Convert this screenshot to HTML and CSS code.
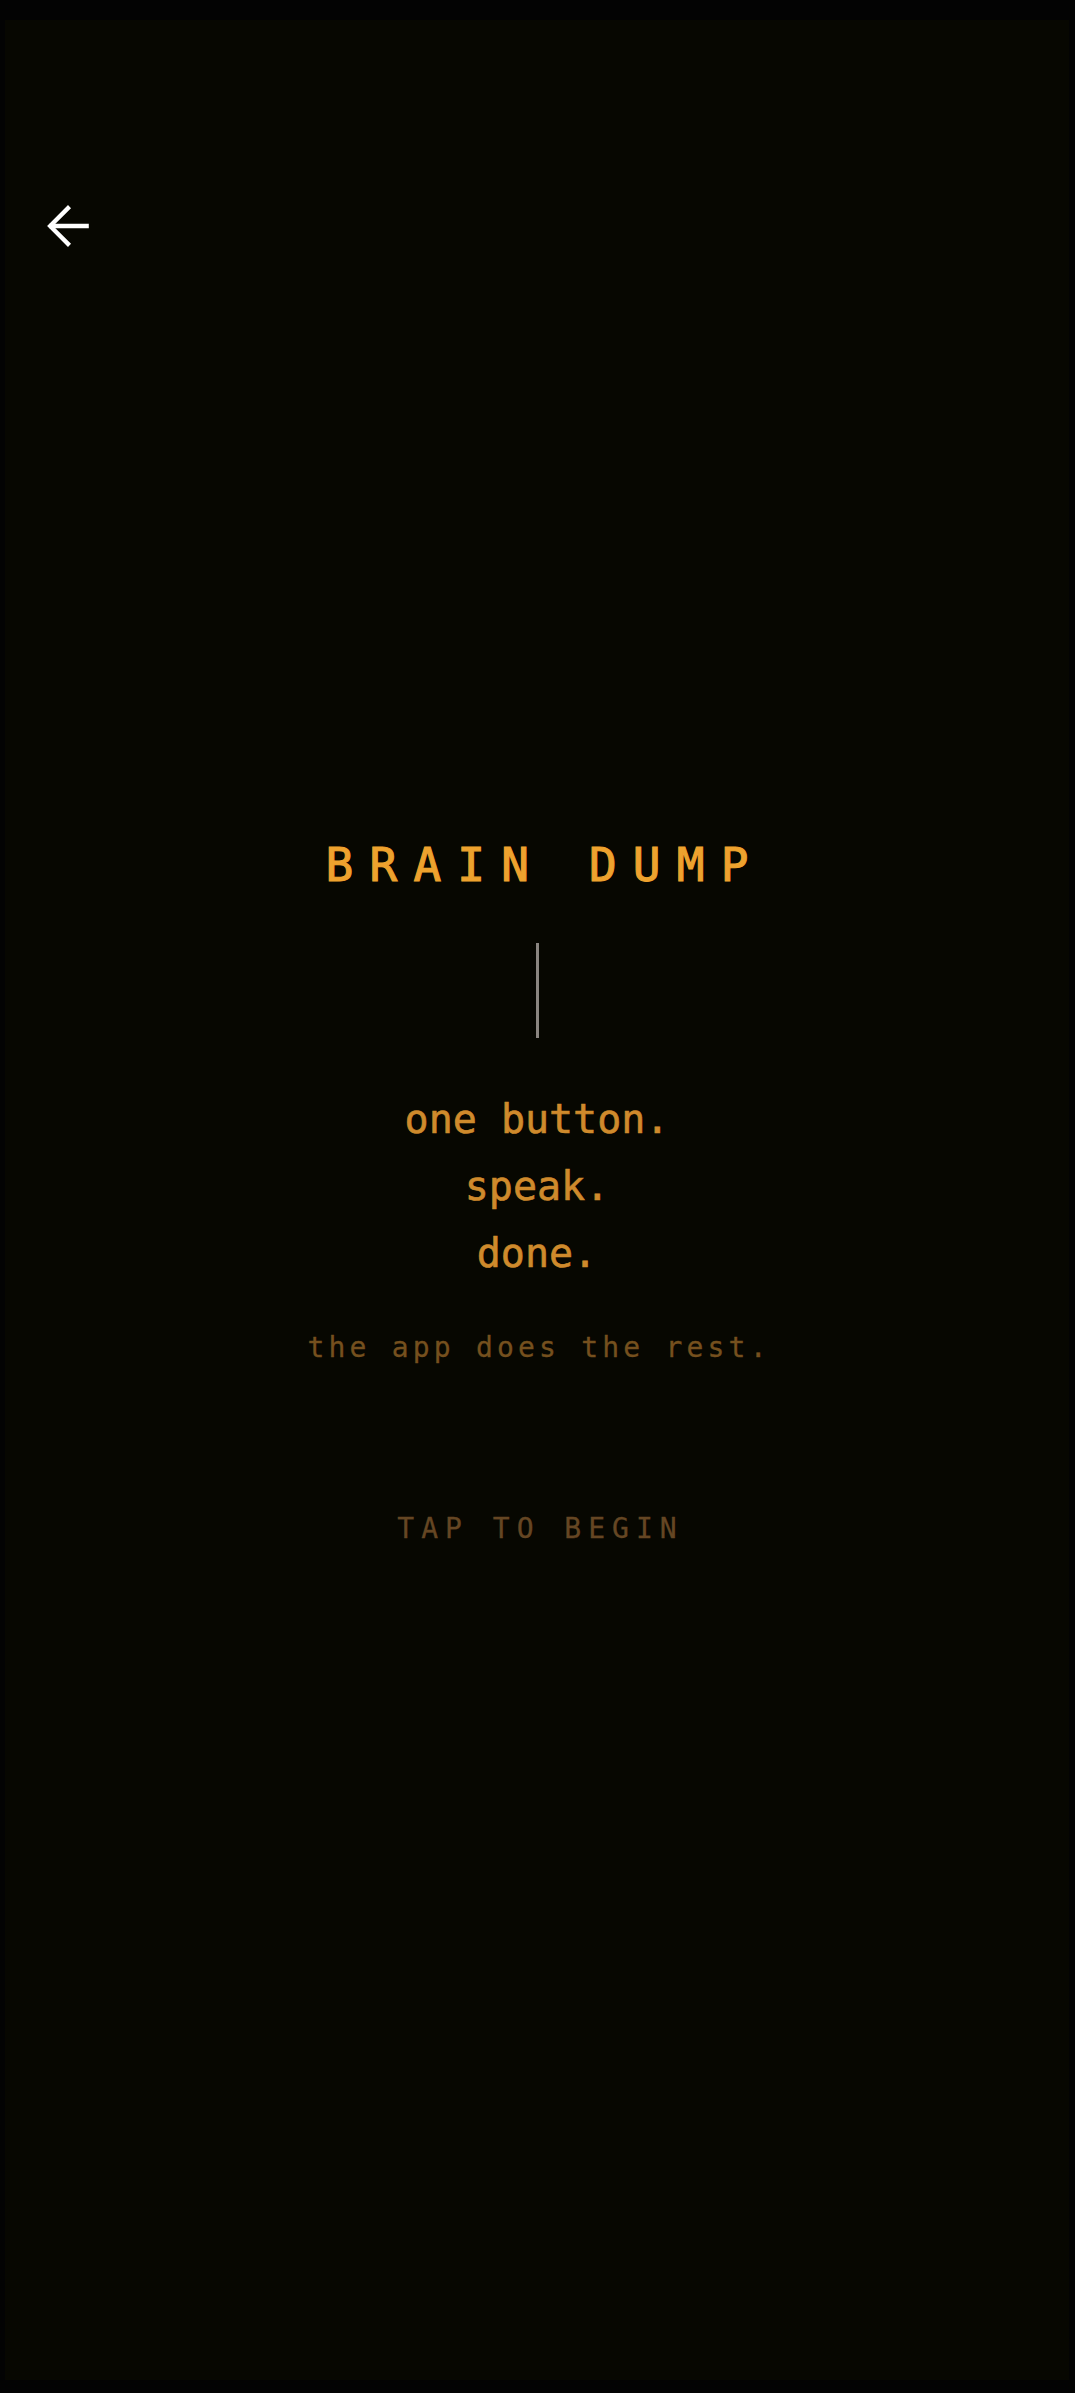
FILE: index.html
```html
<!DOCTYPE html>
<html lang="en">
<head>
<meta charset="utf-8">
<title>Brain Dump</title>
<link rel="stylesheet" href="styles.css">
</head>
<body>
<div class="screen">
  <header class="topbar">
    <button class="back" aria-label="Back">
      <svg viewBox="0 0 24 24" width="64" height="64" fill="none" stroke="#ffffff" stroke-width="1.6" stroke-linecap="square" stroke-linejoin="miter">
        <path d="M19 12H5.8"/>
        <path d="M12 5.3L5.3 12L12 18.7"/>
      </svg>
    </button>
  </header>
  <main class="intro">
    <h1 class="title">BRAIN DUMP</h1>
    <div class="divider"></div>
    <div class="lines">
      <p>one button.</p>
      <p>speak.</p>
      <p>done.</p>
    </div>
    <p class="tagline">the app does the rest.</p>
    <p class="cta">TAP TO BEGIN</p>
  </main>
</div>
</body>
</html>
```

FILE: styles.css
```css
html, body {
  margin: 0;
  padding: 0;
  background: #030303;
}

body {
  width: 1075px;
  height: 2393px;
  overflow: hidden;
  font-family: "DejaVu Sans Mono", "Liberation Mono", monospace;
}

.screen {
  margin: 20px 6px 13px 5px;
  height: 2360px;
  background: #070701;
  display: flex;
  flex-direction: column;
}

.topbar {
  padding: 174px 0 0 31px;
  height: 64px;
}

.back {
  background: none;
  border: 0;
  padding: 0;
  width: 64px;
  height: 64px;
  display: block;
}

.back svg {
  display: block;
}

.intro {
  display: flex;
  flex-direction: column;
  align-items: center;
  padding-top: 579px;
}

.title {
  margin: 0;
  font-size: 46px;
  line-height: 56px;
  font-weight: normal;
  letter-spacing: 16.2px;
  padding-left: 16.2px;
  color: #eea22e;
  -webkit-text-stroke: 1.1px #eea22e;
}

.divider {
  width: 3px;
  height: 95px;
  margin-top: 50px;
  background: #8a8580;
}

.lines {
  margin-top: 48px;
  text-align: center;
}

.lines p {
  margin: 0;
  font-size: 40px;
  line-height: 67px;
  color: #cf8a2c;
  -webkit-text-stroke: 0.6px #cf8a2c;
}

.tagline {
  margin: 43px 0 0;
  font-size: 28px;
  line-height: 36px;
  letter-spacing: 4.2px;
  padding-left: 4.2px;
  color: #75501e;
  -webkit-text-stroke: 0.3px #75501e;
}

.cta {
  margin: 145px 0 0;
  font-size: 28px;
  line-height: 36px;
  letter-spacing: 7px;
  padding-left: 7px;
  color: #654623;
  -webkit-text-stroke: 0.3px #654623;
}
```
